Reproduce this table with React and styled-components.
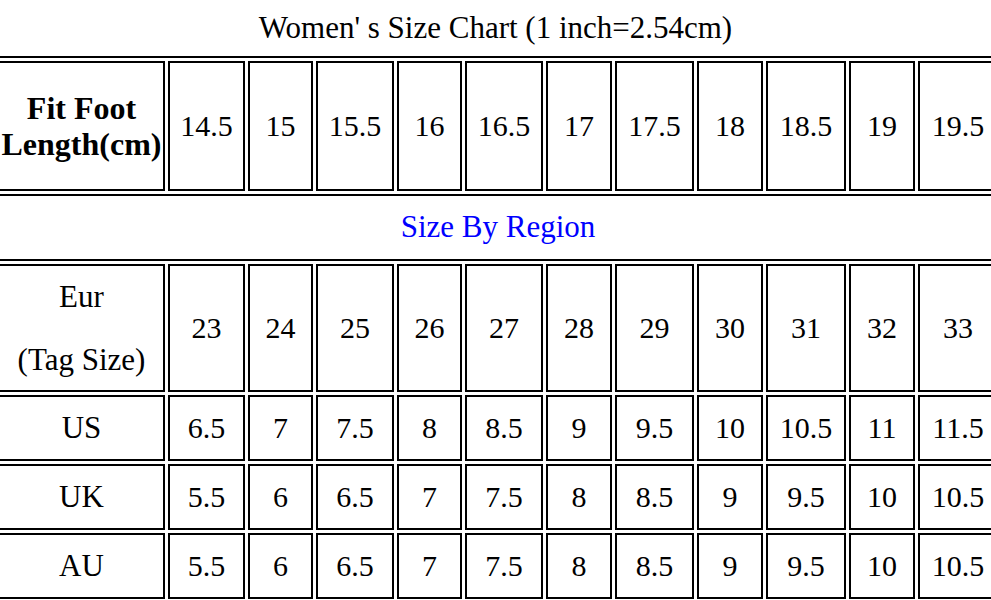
import React from 'react'
import styled, { createGlobalStyle } from 'styled-components'

const GlobalStyle = createGlobalStyle`
  html, body {
    margin: 0;
    padding: 0;
    background: #fff;
  }
`

// column widths taken from the chart (first column is the label column)
const COLS = [167, 77, 65, 78, 65, 78, 66, 79, 66, 80, 66, 80]

const footLength = ['14.5', '15', '15.5', '16', '16.5', '17', '17.5', '18', '18.5', '19', '19.5']
const eur = ['23', '24', '25', '26', '27', '28', '29', '30', '31', '32', '33']

const regions = [
    { name: 'US', sizes: ['6.5', '7', '7.5', '8', '8.5', '9', '9.5', '10', '10.5', '11', '11.5'] },
    { name: 'UK', sizes: ['5.5', '6', '6.5', '7', '7.5', '8', '8.5', '9', '9.5', '10', '10.5'] },
    { name: 'AU', sizes: ['5.5', '6', '6.5', '7', '7.5', '8', '8.5', '9', '9.5', '10', '10.5'] },
]

const Page = styled.div`
    width: 991px;
    height: 600px;
    overflow: hidden;
    background: #fff;
    color: #000;
    font-family: "Liberation Serif", "Times New Roman", serif;
`

const Title = styled.div`
    height: 56px;
    display: flex;
    align-items: center;
    justify-content: center;
    font-size: 31px;
    line-height: 1;
    padding-bottom: 2px;
    box-sizing: border-box;
`

const Chart = styled.div`
    display: grid;
    grid-template-columns: ${COLS.map(w => `${w}px`).join(' ')};
    grid-template-rows: 130px 67px 128px 66px 66px 66px;
    gap: 3px;
    padding: 3px;
    border: 2px solid #000;
    margin-left: -7px;
    width: max-content;
`

const Cell = styled.div`
    box-sizing: border-box;
    border: 2px solid #000;
    display: flex;
    flex-direction: column;
    align-items: center;
    justify-content: center;
    text-align: center;
    font-size: ${p => (p.$bold ? 32 : p.$label ? 31 : 30)}px;
    line-height: 36px;
    font-weight: ${p => (p.$bold ? 700 : 400)};
    white-space: nowrap;
`

const RegionHeading = styled(Cell)`
    grid-column: 1 / -1;
    color: #0000ff;
    padding-bottom: 2px;
`

const TagLabel = styled(Cell)`
    gap: 27px;
`

const App = () => {
    return (
        <Page>
            <GlobalStyle />
            <Title>Women' s Size Chart (1 inch=2.54cm)</Title>
            <Chart>
                <Cell $bold>
                    <span>Fit Foot</span>
                    <span>Length(cm)</span>
                </Cell>
                {footLength.map(v => <Cell key={'fl' + v}>{v}</Cell>)}

                <RegionHeading $label>Size By Region</RegionHeading>

                <TagLabel $label>
                    <span>Eur</span>
                    <span>(Tag Size)</span>
                </TagLabel>
                {eur.map(v => <Cell key={'eu' + v}>{v}</Cell>)}

                {regions.map(r => (
                    <React.Fragment key={r.name}>
                        <Cell $label>{r.name}</Cell>
                        {r.sizes.map((v, i) => <Cell key={r.name + i}>{v}</Cell>)}
                    </React.Fragment>
                ))}
            </Chart>
        </Page>
    )
}

export default App
